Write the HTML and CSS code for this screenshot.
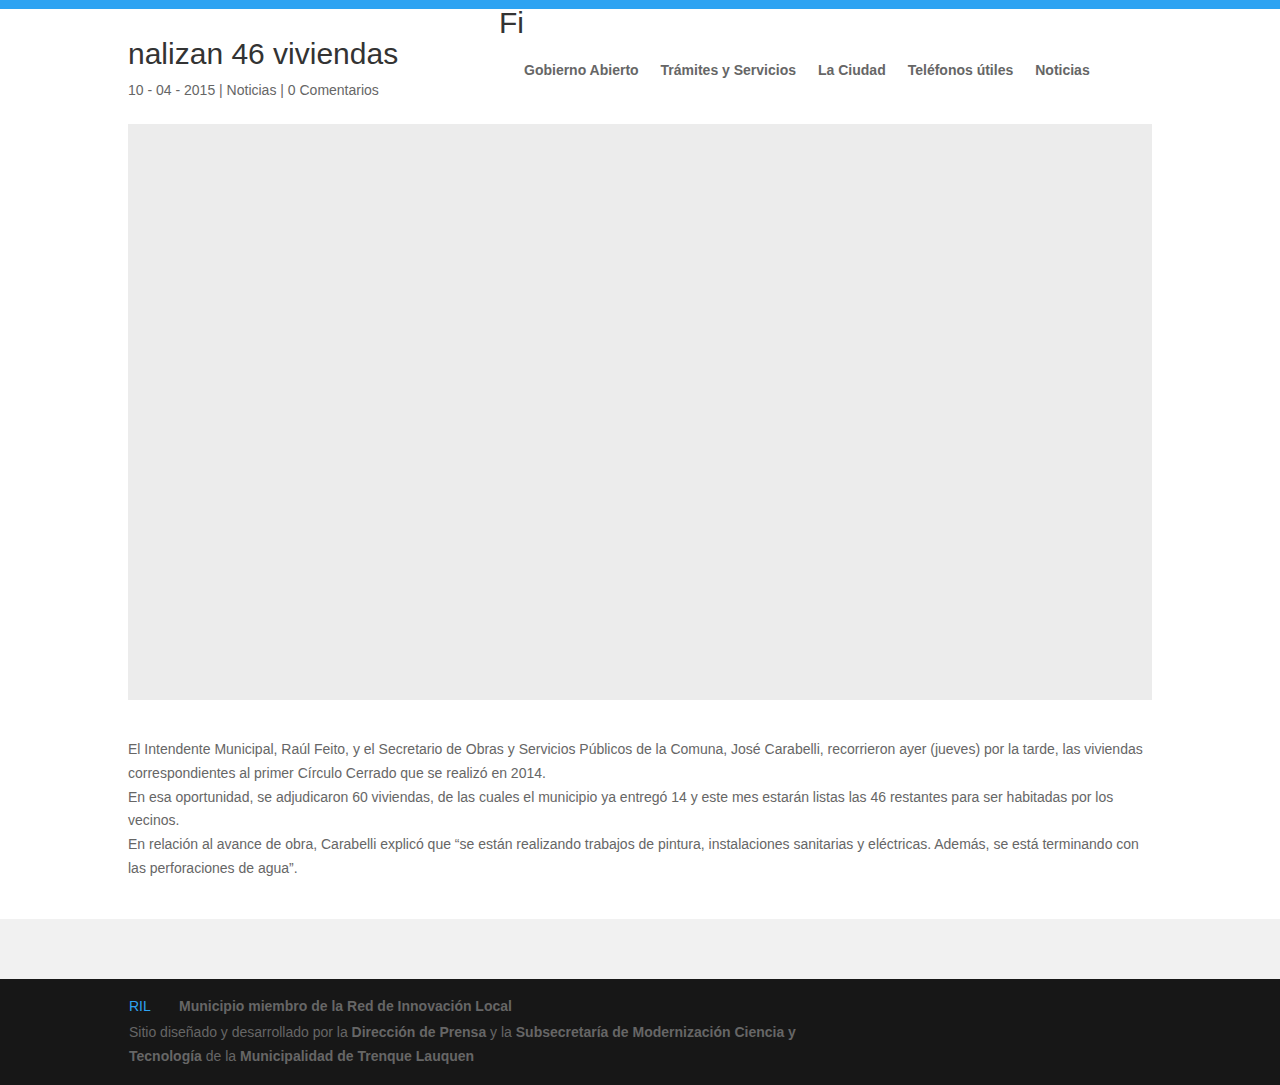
FILE: index.html
```html
<!DOCTYPE html>
<html lang="es">
<head>
<meta charset="utf-8">
<title>Finalizan 46 viviendas</title>
<link rel="stylesheet" href="styles.css">
</head>
<body>
<div class="topbar"></div>
<div class="page">
  <div class="fi">Fi</div>
  <div class="head-row">
    <h1 class="title">nalizan 46 viviendas</h1>
    <nav class="nav">
      <a href="#">Gobierno Abierto</a>
      <a href="#">Trámites y Servicios</a>
      <a href="#">La Ciudad</a>
      <a href="#">Teléfonos útiles</a>
      <a href="#">Noticias</a>
    </nav>
  </div>
  <p class="meta">10 - 04 - 2015 | <a href="#">Noticias</a> | <a href="#">0 Comentarios</a></p>
  <div class="image"></div>
  <div class="content">
    <p>El Intendente Municipal, Raúl Feito, y el Secretario de Obras y Servicios Públicos de la Comuna, José Carabelli, recorrieron ayer (jueves) por la tarde, las viviendas correspondientes al primer Círculo Cerrado que se realizó en 2014.</p>
    <p>En esa oportunidad, se adjudicaron 60 viviendas, de las cuales el municipio ya entregó 14 y este mes estarán listas las 46 restantes para ser habitadas por los vecinos.</p>
    <p>En relación al avance de obra, Carabelli explicó que “se están realizando trabajos de pintura, instalaciones sanitarias y eléctricas. Además, se está terminando con las perforaciones de agua”.</p>
  </div>
</div>
<div class="band"></div>
<footer class="footer">
  <div class="footer-inner">
    <div class="ril"><span class="ril-logo">RIL</span><strong>Municipio miembro de la Red de Innovación Local</strong></div>
    <p class="credits">Sitio diseñado y desarrollado por la <strong>Dirección de Prensa</strong> y la <strong>Subsecretaría de Modernización Ciencia y Tecnología</strong> de la <strong>Municipalidad de Trenque Lauquen</strong></p>
  </div>
</footer>
</body>
</html>
```

FILE: styles.css
```css
* { box-sizing: border-box; }
body {
  margin: 0;
  background: #fff;
  font-family: "Liberation Sans", Arial, sans-serif;
  color: #666;
  font-size: 14px;
}
a { color: inherit; text-decoration: none; }
.topbar {
  height: 9px;
  background: #2ea3f2;
}
.page {
  width: 1024px;
  margin: 0 auto;
}
.fi {
  font-size: 30px;
  line-height: 24px;
  padding-top: 2px;
  color: #333;
  padding-left: 371px;
}
.head-row {
  display: flex;
  align-items: flex-start;
}
.title {
  flex: 0 0 396px;
  margin: 0;
  padding-top: 1px;
  font-size: 30px;
  line-height: 35px;
  font-weight: 400;
  color: #333;
}
.nav {
  display: flex;
  gap: 22px;
  padding-top: 25px;
  font-size: 14px;
  line-height: 20px;
  font-weight: 700;
  color: #666;
}
.meta {
  margin: 0;
  font-size: 14px;
  line-height: 20px;
  color: #666;
}
.image {
  margin-top: 24px;
  height: 576px;
  background: #ececec;
}
.content {
  margin-top: 38px;
  padding-bottom: 38px;
}
.content p {
  margin: 0;
  font-size: 14px;
  line-height: 23.8px;
  color: #666;
}
.band {
  height: 60px;
  background: #f1f1f1;
}
.footer {
  background: #171717;
  padding: 15px 0 17px;
}
.footer-inner {
  width: 1024px;
  margin: 0 auto;
  padding-left: 1px;
}
.ril {
  display: flex;
  align-items: baseline;
  line-height: 24px;
  font-size: 14px;
}
.ril-logo {
  color: #2ea3f2;
  width: 50px;
}
.ril strong { color: #666; }
.credits {
  margin: 2px 0 0;
  width: 700px;
  line-height: 24px;
  font-size: 14px;
  color: #666;
}
.credits strong { color: #666; }
```
